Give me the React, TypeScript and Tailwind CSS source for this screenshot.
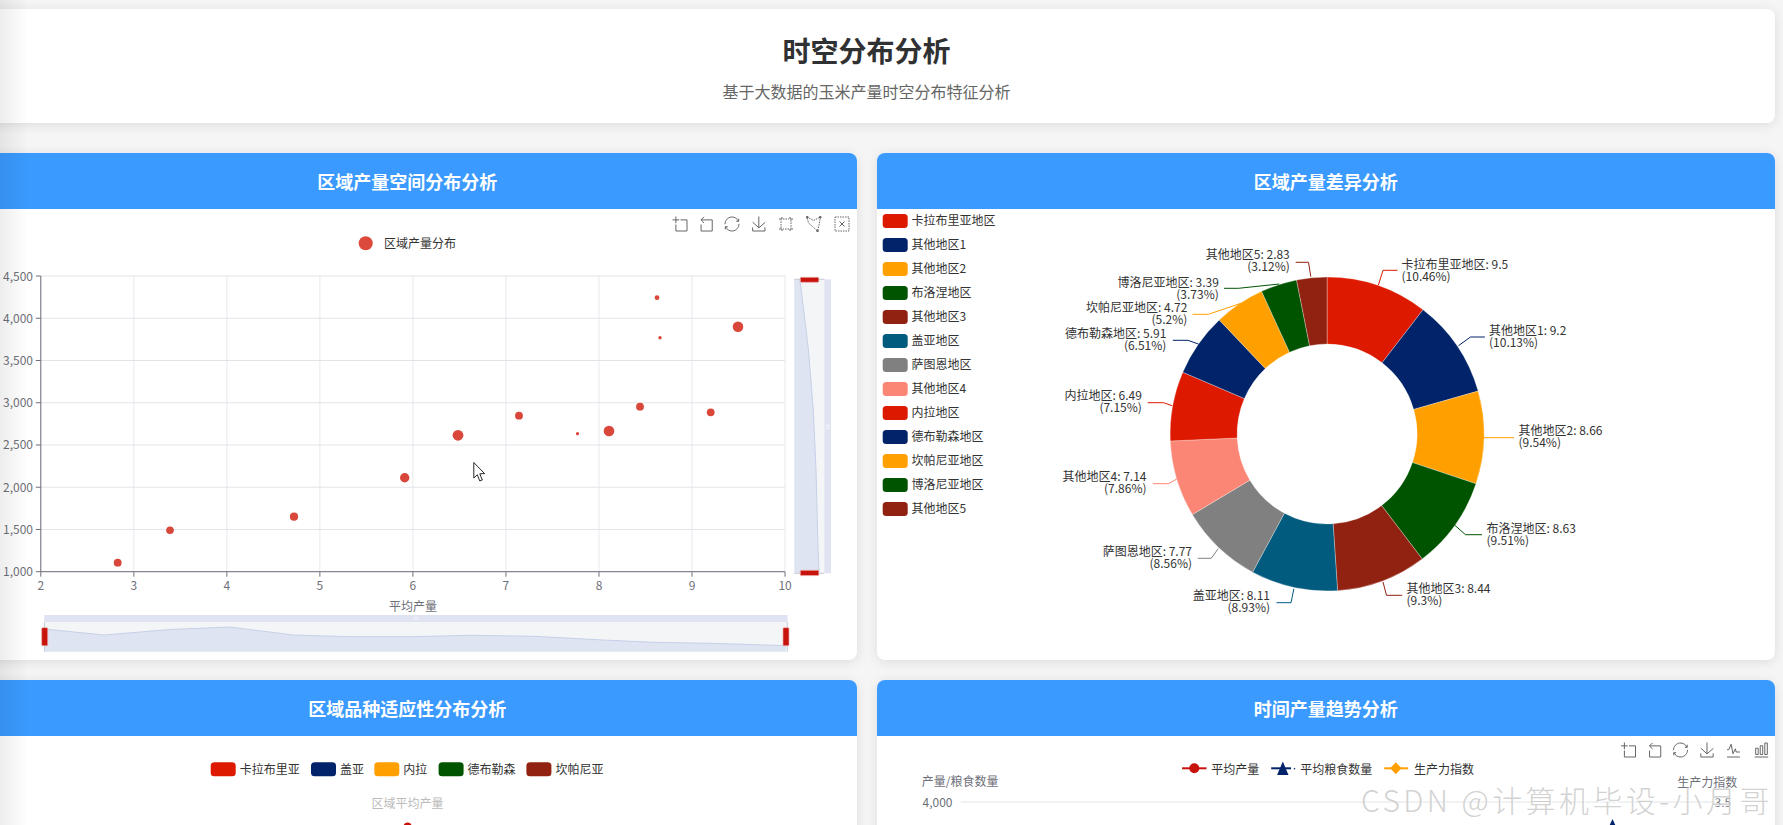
const COLORS = {
  red: "#dd1a00",
  navy: "#00236a",
  orange: "#ff9f00",
  green: "#005400",
  brown: "#912110",
  teal: "#005b7f",
  gray: "#808080",
  salmon: "#fb8675",
};

// every svg below uses page pixels in its viewBox, so numbers can be read straight off the screenshot
const scatterPoints = [
  [657, 297.7, 2.4],
  [660, 337.7, 1.7],
  [738, 326.7, 5.3],
  [519, 415.7, 3.9],
  [640, 406.7, 3.9],
  [710.7, 412.3, 3.9],
  [577.5, 433.7, 1.6],
  [609, 431, 5.3],
  [458, 435.3, 5.4],
  [404.7, 477.7, 4.7],
  [294, 516.7, 4.1],
  [170, 530.3, 3.8],
  [117.7, 562.7, 3.9],
];

const sparkline = "M44,629 L104,635 L170,629.5 L230,627 L293,635 L350,636.7 L413,636.7 L471,635.3 L534,636.3 L603,640 L654,642.3 L712,643.3 L786,645.7";
const sparklineV = "M800,280 L808.3,348.3 L813.3,410 L816,470 L818,546.7 L819,572";

const slices = [
  { name: "卡拉布里亚地区", value: 9.5, pct: "10.46%", color: COLORS.red, side: "l", x: 1401, y: 264, line: "M1377.9,285 L1382.5,270.3 L1397,270.3" },
  { name: "其他地区1", value: 9.2, pct: "10.13%", color: COLORS.navy, side: "l", x: 1488.5, y: 330, line: "M1458,345.7 L1470,337 L1484.4,337" },
  { name: "其他地区2", value: 8.66, pct: "9.54%", color: COLORS.orange, side: "l", x: 1518, y: 430.7, line: "M1482.7,437.7 L1513.6,437.7" },
  { name: "布洛涅地区", value: 8.63, pct: "9.51%", color: COLORS.green, side: "l", x: 1486, y: 528, line: "M1454,525 L1465,534.7 L1481.5,534.7" },
  { name: "其他地区3", value: 8.44, pct: "9.3%", color: COLORS.brown, side: "l", x: 1406, y: 588.7, line: "M1382.5,582 L1386,595.3 L1401.7,595.3" },
  { name: "盖亚地区", value: 8.11, pct: "8.93%", color: COLORS.teal, side: "r", x: 1269.5, y: 595.7, line: "M1293.4,588.7 L1290.5,602.7 L1276,602.7" },
  { name: "萨图恩地区", value: 7.77, pct: "8.56%", color: COLORS.gray, side: "r", x: 1191.5, y: 551.7, line: "M1217.7,548.7 L1210.7,558.3 L1197.3,558.3" },
  { name: "其他地区4", value: 7.14, pct: "7.86%", color: COLORS.salmon, side: "r", x: 1146, y: 476.7, line: "M1176.3,479 L1168,483.7 L1152.5,483.7" },
  { name: "内拉地区", value: 6.49, pct: "7.15%", color: COLORS.red, side: "r", x: 1141.4, y: 395.7, line: "M1171.7,405.7 L1163,402.7 L1147.2,402.7" },
  { name: "德布勒森地区", value: 5.91, pct: "6.51%", color: COLORS.navy, side: "r", x: 1165.9, y: 333.7, line: "M1197.9,344 L1187.4,340.3 L1172.3,340.3" },
  { name: "坎帕尼亚地区", value: 4.72, pct: "5.2%", color: COLORS.orange, side: "r", x: 1186.8, y: 307.7, line: "M1240.4,303.3 L1207.8,314.3 L1192,314.3" },
  { name: "博洛尼亚地区", value: 3.39, pct: "3.73%", color: COLORS.green, side: "r", x: 1218.3, y: 282, line: "M1278.8,284 L1238,288.3 L1223.5,288.3" },
  { name: "其他地区5", value: 2.83, pct: "3.12%", color: COLORS.brown, side: "r", x: 1289.3, y: 254.7, line: "M1310.3,276.7 L1308,262.3 L1295.2,262.3" },
];

const varietyLegend = [
  { name: "卡拉布里亚", color: COLORS.red, x: 210.7 },
  { name: "盖亚", color: COLORS.navy, x: 311 },
  { name: "内拉", color: COLORS.orange, x: 374.3 },
  { name: "德布勒森", color: COLORS.green, x: 438.6 },
  { name: "坎帕尼亚", color: COLORS.brown, x: 526.4 },
];

const ICONS: Record<string, string> = {
  zoom: "M0,13.5h26.9 M13.5,26.9V0 M32.1,13.5H58V58H13.5V32.1",
  back: "M22,1.4L9.9,13.5l12.3,12.3 M10.3,13.5H54.9v44.6H10.3v-26",
  restore:
    "M47,18.9h9.8V8.7 M56.3,20.1C52.1,9,40.5,0.6,26.8,2.1C12.6,3.7,1.6,16.2,2.1,30.6 M13,41.1H3.1v10.2 M3.7,39.9c4.2,11.1,15.8,19.5,29.5,18c14.2-1.6,25.2-14.1,24.7-28.5",
  save: "M4.7,22.9L29.3,45.5L54.7,23.4M4.6,43.6L4.6,58L53.8,58L53.8,43.6M29.2,45.1L29.2,0",
  line: "M4.1,28.9h7.1l9.3-22l7.4,38l9.7-19.7l3,12.8h14.9M4.1,58h51.4",
  bar: "M6.7,22.9h10V48h-10V22.9zM24.9,13h10v35h-10V13zM43.2,2h10v46h-10V2zM3.1,58h53.7",
  rect: "M2,10h12v-8 M46,2v8h12 M58,50h-12v8 M14,58v-8h-12",
  rectDash: "M18,10h24 M50,14v32 M42,50h-24 M10,46v-32",
  polygon: "M2,2 L28,16 L56,2 L50,34 L44,58 L24,40 L8,26 Z",
  polygonDots: "M0,0h6v6h-6z M52,0h6v6h-6z M41,54h6v6h-6z",
  clear: "M20,20L40,40M40,20L20,40",
  clearDash: "M2,2h56v56h-56z",
};

function ToolIcon({ name, x, y, dashed }: { name: string; x: number; y: number; dashed?: boolean }) {
  return (
    <g transform={`translate(${x - 7.5},${y - 7.5}) scale(0.25)`} fill="none" stroke="#666" strokeWidth={4}>
      <path d={ICONS[name]} strokeDasharray={dashed ? "6 4" : undefined} />
    </g>
  );
}

function Label({ x, y, children, anchor, fill = "#333" }: { x: number; y: number; children: React.ReactNode; anchor?: "start" | "middle" | "end"; fill?: string }) {
  // Noto sits a little lower than the capture's font, hence the 1px
  return (
    <text x={x} y={y - 1} fontSize={12} fill={fill} textAnchor={anchor} dominantBaseline="central">
      {children}
    </text>
  );
}

function ScatterChart() {
  const xs = [2, 3, 4, 5, 6, 7, 8, 9, 10];
  const ys = [4500, 4000, 3500, 3000, 2500, 2000, 1500, 1000];
  return (
    <svg className="block w-full h-[450px]" viewBox="-42 209 898.5 450">
      <ToolIcon name="zoom" x={680} y={224} />
      <ToolIcon name="back" x={706} y={224} />
      <ToolIcon name="restore" x={732} y={224} />
      <ToolIcon name="save" x={759} y={224} />
      <ToolIcon name="rect" x={786} y={224} />
      <ToolIcon name="rectDash" x={786} y={224} dashed />
      <ToolIcon name="polygon" x={814} y={224} dashed />
      <ToolIcon name="polygonDots" x={814} y={224} />
      <ToolIcon name="clear" x={842} y={224} />
      <ToolIcon name="clearDash" x={842} y={224} dashed />

      <circle cx={365.7} cy={243.3} r={7} fill="#dd4a3c" />
      <Label x={384} y={243}>区域产量分布</Label>

      {xs.map((v) => {
        const x = 40.8 + (v - 2) * 93.03;
        return (
          <g key={v}>
            <line x1={x} x2={x} y1={276} y2={571.7} stroke="#e6e9ec" />
            <line x1={x} x2={x} y1={571.7} y2={576.7} stroke="#6e7079" />
            <Label x={x} y={585} anchor="middle" fill="#6e7079">{v}</Label>
          </g>
        );
      })}
      {ys.map((v) => {
        const y = 571.7 - ((v - 1000) / 500) * 42.24;
        return (
          <g key={v}>
            <line x1={40.8} x2={785} y1={y} y2={y} stroke="#e1e4e9" />
            <line x1={35.8} x2={40.8} y1={y} y2={y} stroke="#6e7079" />
            <Label x={33} y={y} anchor="end" fill="#6e7079">{v.toLocaleString("en-US")}</Label>
          </g>
        );
      })}
      <line x1={40.8} x2={40.8} y1={276} y2={571.7} stroke="#6e7079" />
      <line x1={40.8} x2={785} y1={571.7} y2={571.7} stroke="#6e7079" />
      <Label x={413} y={606.7} anchor="middle" fill="#6e7079">平均产量</Label>

      {scatterPoints.map(([cx, cy, r]) => (
        <circle key={cx} cx={cx} cy={cy} r={r} fill="#d9463a" />
      ))}

      {/* horizontal zoom slider */}
      <rect x={44.2} y={615} width={743.4} height={7} fill="#e0e4f2" />
      <rect x={44.2} y={622} width={743.4} height={29.7} fill="#f4f5f6" />
      <path d={`${sparkline} L786,651.7 L44,651.7 Z`} fill="#dfe4f2" stroke="none" />
      <path d={sparkline} fill="none" stroke="#c6d1e8" />
      <line x1={44.5} x2={44.5} y1={622} y2={651.7} stroke="#c9cfdf" />
      <line x1={787.3} x2={787.3} y1={622} y2={651.7} stroke="#c9cfdf" />
      <rect x={41.7} y={627.7} width={6} height={18} rx={1} fill="#c8120c" stroke="#e9a9a6" strokeWidth={0.7} />
      <rect x={783} y={627.7} width={6} height={18} rx={1} fill="#c8120c" stroke="#e9a9a6" strokeWidth={0.7} />
      <path d="M414.5,616.5v3.5 M416,616.5v3.5 M417.5,616.5v3.5" stroke="#f4f5f6" strokeWidth={0.7} />

      {/* vertical zoom slider */}
      <rect x={794.3} y={279.3} width={30} height={294} fill="#f4f5f6" />
      <rect x={824.3} y={279.3} width={6.7} height={294} fill="#e0e4f2" />
      <path d={`${sparklineV} L819,573.3 L794.3,573.3 L794.3,279.3 L800,279.3 Z`} fill="#dfe4f2" />
      <path d={sparklineV} fill="none" stroke="#c6d1e8" />
      <path d="M794.3,279.3 H824.3 M794.3,573.3 H824.3" stroke="#c9cad2" />
      <rect x={800.3} y={277.3} width={18.5} height={5} rx={1.2} fill="#c8120c" stroke="#e9a9a6" strokeWidth={0.8} />
      <rect x={800.3} y={570.3} width={18.5} height={5.3} rx={1.2} fill="#c8120c" stroke="#e9a9a6" strokeWidth={0.8} />
      <path d="M826,425h3.5 M826,426.7h3.5 M826,428.4h3.5" stroke="#f8f9fb" strokeWidth={0.7} />

      {/* mouse cursor caught in the capture */}
      <path d="M473.8,462.5 L473.8,478 L477.3,474.8 L479.8,481 L482.3,480 L479.8,473.8 L484.6,473.6 Z" fill="#fff" stroke="#111" strokeWidth={0.9} />
    </svg>
  );
}

function arcPath(a0: number, a1: number, cx: number, cy: number, R: number, r: number) {
  const pt = (rad: number, a: number) => `${cx + rad * Math.sin(a)},${cy - rad * Math.cos(a)}`;
  const large = a1 - a0 > Math.PI ? 1 : 0;
  return `M${pt(R, a0)} A${R},${R} 0 ${large} 1 ${pt(R, a1)} L${pt(r, a1)} A${r},${r} 0 ${large} 0 ${pt(r, a0)} Z`;
}

function PieChart() {
  const total = slices.reduce((s, d) => s + d.value, 0);
  let angle = 0;
  return (
    <svg className="block w-full h-[450px]" viewBox="876.5 209 898.5 450">
      {slices.map((d, i) => (
        <g key={d.name}>
          <rect x={882.2} y={214 + i * 24} width={25} height={14} rx={3.5} fill={d.color} />
          <Label x={911} y={220 + i * 24}>{d.name}</Label>
        </g>
      ))}
      {slices.map((d) => {
        const a0 = angle;
        angle += (d.value / total) * Math.PI * 2;
        return <path key={d.name} d={arcPath(a0, angle, 1326.6, 434, 157, 90)} fill={d.color} stroke="#fff" strokeWidth={0.3} />;
      })}
      {slices.map((d) => (
        <g key={d.name}>
          <path d={d.line} fill="none" stroke={d.color} />
          <Label x={d.x} y={d.y} anchor={d.side === "l" ? "start" : "end"}>{`${d.name}: ${d.value}`}</Label>
          <Label x={d.x} y={d.y + 12} anchor={d.side === "l" ? "start" : "end"}>{`(${d.pct})`}</Label>
        </g>
      ))}
    </svg>
  );
}

function VarietyChart() {
  return (
    <svg className="block w-full h-[450px]" viewBox="-42 735 898.5 450">
      {varietyLegend.map((d) => (
        <g key={d.name}>
          <rect x={d.x} y={761.3} width={25} height={14} rx={3.5} fill={d.color} />
          <Label x={d.x + 29} y={768.8}>{d.name}</Label>
        </g>
      ))}
      <Label x={407.6} y={802.5} anchor="middle" fill="#bbb">区域平均产量</Label>
      <circle cx={407.6} cy={825.5} r={4} fill="#c8120c" />
    </svg>
  );
}

function TrendChart() {
  return (
    <svg className="block w-full h-[450px]" viewBox="876.5 735 898.5 450">
      <ToolIcon name="zoom" x={1628} y={749} />
      <ToolIcon name="back" x={1654} y={749} />
      <ToolIcon name="restore" x={1680} y={749} />
      <ToolIcon name="save" x={1706.7} y={749} />
      <ToolIcon name="line" x={1733} y={749} />
      <ToolIcon name="bar" x={1761} y={749} />

      <line x1={1181.6} x2={1206} y1={767.3} y2={767.3} stroke="#c8120c" strokeWidth={2} />
      <circle cx={1193.8} cy={767.3} r={5} fill="#c8120c" />
      <Label x={1210.7} y={768}>平均产量</Label>

      <line x1={1270.7} x2={1290.5} y1={767.3} y2={767.3} stroke={COLORS.navy} strokeWidth={2} />
      <circle cx={1294} cy={767.8} r={0.8} fill={COLORS.navy} />
      <path d="M1282.3,760.5 L1288,774 L1276.6,774 Z" fill={COLORS.navy} />
      <Label x={1299.8} y={768}>平均粮食数量</Label>

      <line x1={1383.7} x2={1407.6} y1={767.3} y2={767.3} stroke={COLORS.orange} strokeWidth={2} />
      <path d="M1395.3,761.3 L1401,767.3 L1395.3,773.3 L1389.6,767.3 Z" fill={COLORS.orange} />
      <Label x={1413.4} y={768}>生产力指数</Label>

      <Label x={921.3} y={780.7} fill="#6e7079">产量/粮食数量</Label>
      <Label x={1736.7} y={781} anchor="end" fill="#6e7079">生产力指数</Label>
      <Label x={952} y={801.7} anchor="end" fill="#6e7079">4,000</Label>
      <Label x={1730.7} y={801.7} anchor="end" fill="#6e7079">3.5</Label>
      <line x1={960.3} x2={1713} y1={801} y2={801} stroke="#e1e4e9" />
      <path d="M1612,818 L1618,831 L1606,831 Z" fill={COLORS.navy} />
    </svg>
  );
}

function ChartCard({ title, children }: { title: string; children: React.ReactNode }) {
  return (
    <div className="bg-white rounded-lg overflow-hidden shadow-[0_2px_12px_rgba(0,0,0,0.1)] h-[507px]">
      <div className="h-[56px] bg-[#3a9aff] text-white text-[18px] font-bold flex items-center justify-center">
        {title}
      </div>
      {children}
    </div>
  );
}

export default function App() {
  return (
    <div className="relative h-[825px] overflow-hidden bg-[#f5f5f5] [font-family:'Noto_Sans_CJK_SC',sans-serif]">
      <div className="ml-[-42px] w-[1817px] pt-[9px]">
        <div className="h-[114px] mb-[30px] bg-white rounded-lg shadow-[0_2px_12px_rgba(0,0,0,0.1)] pt-[23px] text-center">
          <h1 className="text-[28px] leading-[36px] font-bold text-[#303133]">时空分布分析</h1>
          <p className="mt-[13px] text-[16px] leading-[20px] text-[#666]">基于大数据的玉米产量时空分布特征分析</p>
        </div>
        <div className="grid grid-cols-2 gap-[20px]">
          <ChartCard title="区域产量空间分布分析">
            <ScatterChart />
          </ChartCard>
          <ChartCard title="区域产量差异分析">
            <PieChart />
          </ChartCard>
          <ChartCard title="区域品种适应性分布分析">
            <VarietyChart />
          </ChartCard>
          <ChartCard title="时间产量趋势分析">
            <TrendChart />
          </ChartCard>
        </div>
      </div>

      {/* shadow of the sidebar sitting just off screen */}
      <div className="absolute left-0 top-0 bottom-0 w-[28px] bg-gradient-to-r from-black/[0.07] to-transparent pointer-events-none" />

      {/* CSDN watermark burnt into the capture */}
      <div className="absolute left-[1361px] top-[774px] leading-[50px] text-[30px] font-light tracking-[3.4px] whitespace-nowrap text-[#c4c4c4]/75 [text-shadow:1px_1px_1px_rgba(255,255,255,0.8)] pointer-events-none">
        CSDN @计算机毕设-小月哥
      </div>
    </div>
  );
}
